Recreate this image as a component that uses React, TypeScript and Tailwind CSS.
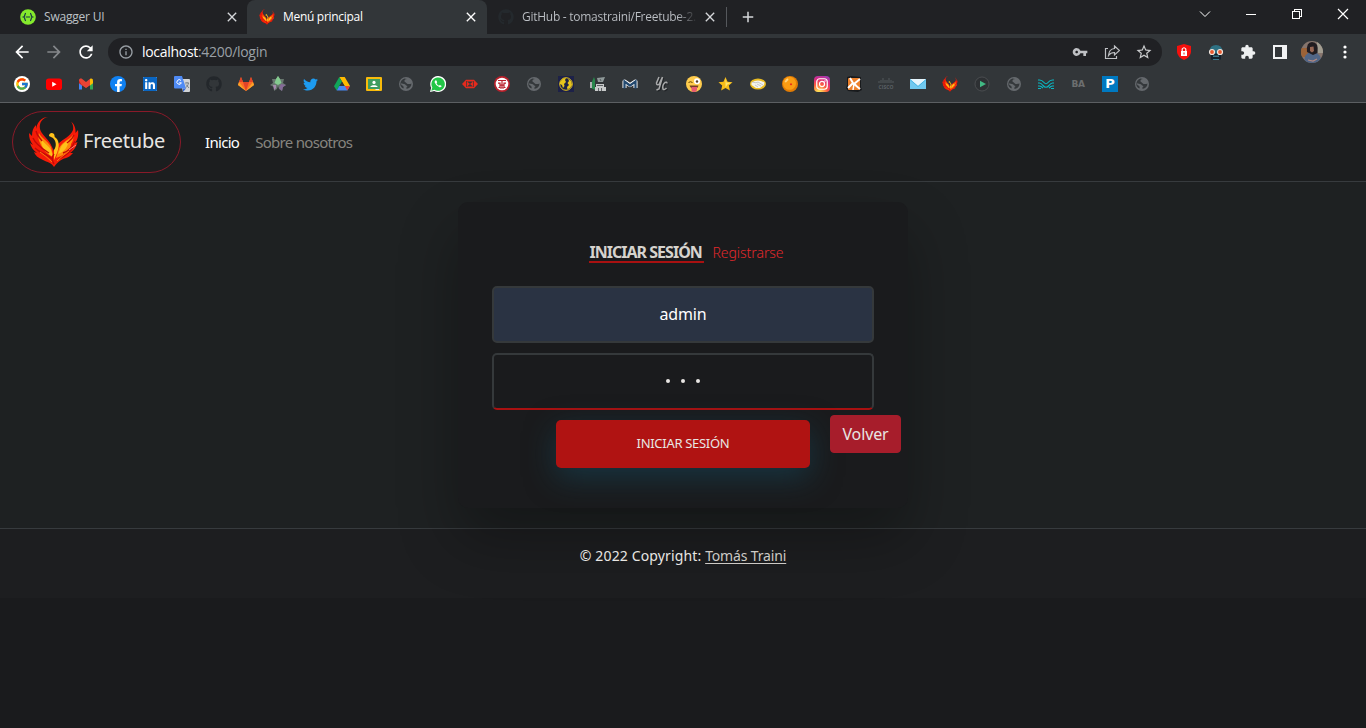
import React from "react";
import { FcGoogle } from "react-icons/fc";
import { FaGithub, FaTwitter, FaFacebookF, FaLinkedin } from "react-icons/fa";
import {
  MdArrowBack,
  MdArrowForward,
  MdRefresh,
  MdInfoOutline,
  MdVpnKey,
  MdStarBorder,
  MdExtension,
  MdClose,
  MdAdd,
} from "react-icons/md";

type SvgProps = { className?: string; children?: React.ReactNode };

const Svg16 = ({ className = "size-4", children }: SvgProps) => (
  <svg viewBox="0 0 16 16" className={className}>
    {children}
  </svg>
);

const Phoenix = ({ className = "size-4" }: { className?: string }) => (
  <svg viewBox="0 0 50 52" className={className}>
    <path
      d="M19 1C13 2 10 7 11 13C12 18 18 22 21 27L25 35L29 28C34 23 42 20 44 14C45 10 43 6 41 5C45 7 47 12 46.500 17L49 14C50 20 48 25 46 27L48.500 26C47 32 44 35 41 37L44 37C41 41 37 42 34 43C30 45 28 47 25 51C23 47 18 46 14 44C9 42 6 39 5 36L8 37C4 34 2 31 1 27L4 29C1 25 0 22 0 17L3 20C3 15 4 12 7 9L7 13C8 7 12 1 19 1Z"
      fill="#f51b08"
    />
    <path
      d="M10 17C12 22 18 24 22 31L24 39C18 36 13 33 11 27C9 23 9 20 10 17ZM44 19C40 24 34 25 30 32L27 42L32 40C38 37 42 33 42 28C44 25 45 22 44 19Z"
      fill="#ff8a0a"
    />
    <path
      d="M12 23C15 27 19 29 22 34L24 41C18 38 12 33 12 23ZM40 24C36 26 33 28 31 33L29 38C35 36 39 31 40 24ZM25 34C28 30 27 25 24 22L20 20C20 17 23 16 25 18C26 20 25 21 27 22C31 26 30 32 28 37L25 44Z"
      fill="#ffc21a"
    />
    <path
      d="M4 22C7 29 14 33 20 37M6 32C11 37 18 38 23 43M30 43C36 40 41 37 44 31M34 37C40 35 44 30 46 25M25 38C22 42 23 45 25 48M7 15C8 20 11 22 13 25M45 19C43 24 40 25 38 27"
      stroke="#c40907"
      strokeWidth="1.400"
      fill="none"
    />
    <path d="M11 36Q17 40 23 46M40 35Q32 41 28 45" stroke="#ff7a0c" fill="none" />
    <path d="M40 34L47 29" stroke="#ff9a91" strokeWidth=".8" />
  </svg>
);

const Swagger = () => (
  <Svg16>
    <circle cx="8" cy="8" r="7.800" fill="#85ea2d" />
    <path
      d="M6 4.400C4.200 4.400 5.600 7.400 3.600 8C5.600 8.600 4.200 11.600 6 11.600M10 4.400C11.800 4.400 10.400 7.400 12.400 8C10.400 8.600 11.800 11.600 10 11.600M5.800 8H10.200"
      stroke="#173647"
      strokeWidth="1.200"
      fill="none"
    />
  </Svg16>
);

const Google = () => (
  <span className="flex size-4 items-center justify-center rounded-full bg-white">
    <FcGoogle className="size-[14px]" />
  </span>
);
const YouTube = () => (
  <Svg16>
    <rect y="2.500" width="16" height="11.500" rx="2.800" fill="#f00" />
    <path d="M6.200 5.800V10.700L10.500 8.250Z" fill="#fff" />
  </Svg16>
);
const Gmail = () => (
  <Svg16>
    <path d="M1 3.800V13.500H4V7Z" fill="#4285f4" />
    <path d="M15 3.800V13.500H12V7Z" fill="#34a853" />
    <path d="M1 4.500V7.200L4 9.400V5Z" fill="#c5221f" />
    <path d="M15 4.500V7.200L12 9.400V5Z" fill="#fbbc04" />
    <path d="M1 4.500C1 2.500 3 2 4.200 3L8 5.900L11.800 3L12 3V9.400L8 12.200L4 9.400Z" fill="#ea4335" />
    <path d="M12 3C13.200 2 15 2.600 15 4.500L12 6.700Z" fill="#fbbc04" />
    <path d="M4 9.400L8 12.300L12 9.400V13.500H4Z" fill="#323639" />
  </Svg16>
);
const Facebook = () => (
  <span className="flex size-4 items-end justify-center rounded-full bg-[#1081f2]">
    <FaFacebookF className="h-[13px] w-[9px] text-white" />
  </span>
);
const LinkedIn = () => (
  <span className="flex size-[14px] items-center justify-center bg-white">
    <FaLinkedin className="size-4 shrink-0 text-[#0a66c2]" />
  </span>
);
const Translate = () => (
  <Svg16>
    <path d="M6 3H15Q16 3 16 4V15Q16 16 15 16H9Z" fill="#d2d4d6" />
    <path d="M9 12.500H12L9 16Z" fill="#3367d6" />
    <path d="M1 0H8L12 12.500H1Q0 12.500 0 11.500V1Q0 0 1 0Z" fill="#4f8bf5" />
    <path d="M7 4.500A2.300 2.300 0 1 0 7.400 6.800H5.200" stroke="#fff" strokeWidth="1" fill="none" />
    <path d="M11 7H15M13 6V7M14.500 7C14 9.500 12.800 11 11.500 12M12 8.500L15 12" stroke="#717a82" strokeWidth=".9" fill="none" />
  </Svg16>
);
const GitLab = () => (
  <Svg16>
    <path d="M8 15L0 9L1 6L3 1L5 6H11L13 1L15 6L16 9Z" fill="#fc6d26" />
    <path d="M8 15L5 6H11Z" fill="#e24329" />
    <path d="M8 15L0 9L1 6ZM8 15L16 9L15 6Z" fill="#fca326" />
    <path d="M1 6L3 1L5 6ZM11 6L13 1L15 6Z" fill="#e24329" />
  </Svg16>
);
const Cog = () => (
  <Svg16>
    <path d="M8 0L10 3L14 3L13 7L16 9L13 11L12 15L9 13L8 10L7 13L4 15L4 11L0 9L3 7L2 3L6 3Z" fill="#68776f" />
    <path d="M8 0L10 3L11.500 7L8 9L4.500 7L6 3Z" fill="#84cb8f" />
    <path d="M11 8L16 9L13 11L12 15L9 12Z" fill="#856a98" />
    <path d="M3 9L6 9L6 12L4 14Z" fill="#a68aae" />
  </Svg16>
);
const Drive = () => (
  <Svg16>
    <path d="M5.300 1H10.700L16 10H10.700Z" fill="#ffba00" />
    <path d="M5.300 1L0 10.200L2.700 14.500L8 5.700Z" fill="#10a65a" />
    <path d="M5.300 10H16L13.300 14.500H2.700Z" fill="#4688f4" />
    <path d="M10.800 10H16L13.300 14.500Z" fill="#ea4335" />
    <path d="M8 5.700L10.500 10H5.400Z" fill="#323639" />
  </Svg16>
);
const Classroom = () => (
  <Svg16>
    <rect y="1" width="16" height="14" rx="1" fill="#f9bb0b" />
    <rect x="2" y="3" width="12" height="10" fill="#3f9c60" />
    <circle cx="8" cy="6.400" r="1.600" fill="#fff" />
    <path d="M4.300 11C4.500 8.500 11.500 8.500 11.700 11Z" fill="#fff" />
    <path d="M9.500 13H13V14H9.500Z" fill="#eee" />
  </Svg16>
);
const Globe = () => (
  <Svg16>
    <circle cx="8" cy="8" r="7" fill="#65696d" />
    <path
      d="M9 3Q6 3 6.500 5.500L9.500 8Q13 8 13.500 7.500L13 10Q11 13 8.500 13Q8 11 9.500 10.300Q7.500 9 7 8.200L2.700 7.200Q3 9.500 5.200 10Q6 11 5.500 12.500Q2 11 2.300 7.500Q3 3.500 6.500 2.500Z"
      fill="#34383b"
    />
  </Svg16>
);
const WhatsApp = () => (
  <Svg16>
    <path d="M0 16L1.200 11.800A8 8 0 1 1 4.200 14.900Z" fill="#fff" />
    <path d="M1.300 14.700L2.300 11.500A6.700 6.700 0 1 1 4.500 13.800Z" fill="#22c647" />
    <path d="M5.600 4.300Q4.300 5 4.700 6.500Q6 10 9.500 11.300Q11.300 11.500 11.700 10L9.900 8.900L8.900 9.800Q7.300 9 6.500 7.300L7.200 6.300L6.400 4.400Z" fill="#fff" />
  </Svg16>
);
const RedHex = () => (
  <Svg16>
    <path d="M0 8L4 3.800H12L16 8L12 12.200H4Z" fill="#e52a1d" />
    <path d="M5 5.500H11L8 8ZM5 10.500H11L8 8Z" fill="#34373a" />
    <path d="M4.500 5V11M11.500 5V11" stroke="#34373a" strokeWidth=".7" />
  </Svg16>
);
const RedSeal = () => (
  <Svg16>
    <circle cx="8" cy="8" r="8" fill="#b9202b" />
    <circle cx="8" cy="8" r="6.300" fill="#fff" />
    <path d="M4 4.500H12M4 7.200H6V11.500H4.500M12 7.200H10V11.500H11.500M8 4.500V11.500M6 9.200H10M6 12H10" stroke="#b9202b" strokeWidth="1.200" fill="none" />
  </Svg16>
);
const YellowGlobe = () => (
  <Svg16>
    <path d="M0 0H16V16H0Z" fill="#1d2148" />
    <circle cx="8" cy="8" r="6.300" fill="#1d2148" stroke="#e8c51c" strokeWidth="1" />
    <path d="M2 6L5 2.500L8 2L7 4L8 6L6 8L6.500 10L5 12L4 9L2 8ZM10 2.500L13 5L14 9L12 12L9.500 13.500L9 11L11 9L9.500 7L11 5Z" fill="#e8c51c" />
  </Svg16>
);
const GreenSign = () => (
  <Svg16>
    <path d="M7 2L15 1L13 6H8Z" fill="#8f9999" />
    <path d="M4 1L1 8V12L5 14V4Z" fill="#27874b" />
    <path d="M0 6H2V12H0Z" fill="#aeb3b4" />
    <path d="M6 8H14V11H6ZM5 11H16V15H5Z" fill="#c7caca" />
    <path d="M10 3L11 5M8.500 12V15M11.500 12V15M7 9.500H13" stroke="#42474b" strokeWidth=".8" />
  </Svg16>
);
const BlueM = () => (
  <Svg16>
    <path d="M2.500 12V5.500L8 9.200L13.500 5.500V12" stroke="#fff" strokeWidth="4" fill="none" strokeLinejoin="round" />
    <path d="M2.500 12.500V5.500L8 9.500L13.500 5.500V12.500" stroke="#23496f" strokeWidth="2.300" fill="none" />
  </Svg16>
);
const Script = () => (
  <Svg16>
    <g fill="none" strokeWidth="1.500">
      <path d="M5 1L2.500 7Q2.500 9.500 5 8.500L8 2M8.500 1L5 13L2.500 14M13 7.500Q13 5.500 11 6.500Q8 9 9 13Q10 14.500 12.500 12" stroke="#202326" transform="translate(1 1)" />
      <path d="M5 1L2.500 7Q2.500 9.500 5 8.500L8 2M8.500 1L5 13L2.500 14M13 7.500Q13 5.500 11 6.500Q8 9 9 13Q10 14.500 12.500 12" stroke="#a8a9aa" />
    </g>
  </Svg16>
);
const Wink = () => (
  <Svg16>
    <circle cx="8" cy="8" r="8" fill="#ffcc4d" />
    <circle cx="11" cy="5.300" r="3" fill="#fff" />
    <circle cx="11" cy="5.500" r="1.200" fill="#57402b" />
    <path d="M2.500 6.500Q4.500 5 6.500 6.500" stroke="#664500" strokeWidth="1" fill="none" />
    <path d="M3.500 9.500H12.500Q12 12.500 8 13Q4.500 12.500 3.500 9.500Z" fill="#754027" />
    <path d="M5.500 11H11V14Q10.500 16 8.300 16Q5.500 16 5.500 14Z" fill="#e75a70" />
  </Svg16>
);
const Star = () => (
  <Svg16 className="mr-px size-4">
    <path d="M8 .5L10.200 5.500L15.500 6L11.500 9.500L12.700 15L8 12.200L3.300 15L4.500 9.500L.5 6L5.800 5.500Z" fill="#f7bd18" />
    <path d="M8 2L9 6.500L14 6.700L10 8.500L8 12Z" fill="#ffe46b" />
  </Svg16>
);
const Handshake = () => (
  <Svg16>
    <ellipse cx="8" cy="8" rx="8" ry="5.500" fill="#eabc22" />
    <path d="M1.500 6.500Q8 2.700 14.500 6.500L14 9L10 12H6L1.500 9Z" fill="#f5f4ec" />
    <path d="M2 6L6 6.800L8 6L13 9M5 9L8 11M7 8L11 10" stroke="#a3abb0" strokeWidth=".6" fill="none" />
  </Svg16>
);
const OrangeBall = () => (
  <Svg16>
    <circle cx="8" cy="8" r="8" fill="#e17c05" />
    <circle cx="7.500" cy="7.300" r="6.500" fill="#fb9d13" />
    <path d="M2.500 6Q3.500 3 6 2.200L6.500 4L4 6.500Z" fill="#ffd27a" />
    <path d="M9 7L10.200 8.200L9 9.400L7.800 8.200Z" fill="#e9231c" />
  </Svg16>
);
const Instagram = () => (
  <span className="flex size-4 items-center justify-center rounded-[4px] bg-[radial-gradient(circle_at_30%_105%,#ffdb55_10%,#fd6040_42%,#dd2b7b_68%,#8141cb_100%)]">
    <Svg16 className="size-3">
      <g fill="none" stroke="#fff" strokeWidth="1.600">
        <rect x="1" y="1" width="14" height="14" rx="4" />
        <circle cx="8" cy="8" r="3.400" />
      </g>
      <circle cx="12" cy="4" r="1" fill="#fff" />
    </Svg16>
  </span>
);
const OrangeX = () => (
  <Svg16>
    <path d="M1 1L5 0L15 1V11L16 14L12 16L2 15L0 12L1 9Z" fill="#181a1c" />
    <rect x="2" y="2" width="12" height="12" rx="1" fill="#ed812b" />
    <path d="M4 2L7 7L2 12M14 3L8 8L14 13M7 7L10 9" stroke="#fff" strokeWidth="2" fill="none" />
    <path d="M8 8L7 14" stroke="#fff" strokeWidth="1.500" />
  </Svg16>
);
const Cisco = () => (
  <span className="flex h-4 w-4 flex-col items-center justify-center">
    <svg viewBox="0 0 16 6" className="h-[6px] w-4">
      <path d="M1 3V5M3 2V5M5 0V5M7 2V5M9 2V5M11 0V5M13 2V5M15 3V5" stroke="#53585d" />
    </svg>
    <span className="text-[5px] leading-[6px] font-bold text-[#5b6065]">CISCO</span>
  </span>
);
const Mail = () => (
  <Svg16>
    <rect y="3" width="16" height="10" fill="#70c9ef" />
    <path d="M0 3H16L8 10Z" fill="#e5f5fc" />
    <path d="M0 3.500L8 10.500L16 3.500" stroke="#3caee0" strokeWidth=".8" fill="none" />
  </Svg16>
);
const Play = () => (
  <Svg16>
    <circle cx="8" cy="8" r="7" fill="#2d3033" stroke="#505356" strokeWidth=".8" />
    <path d="M6 4.700V11.300L12 8Z" fill="#41b883" />
  </Svg16>
);
const Waves = () => (
  <Svg16>
    <path d="M0 4H1.500Q4 4 6 6.500Q8 9 10 6.500Q12 4 14.500 4H16M0 7H1.500Q3 7 5 9.500Q8 13 11 9.500Q13 7 14.500 7H16M0 10H1.500Q3 10 5 12M11 12Q13 10 14.500 10H16M0 12.500H3M13 12.500H16" stroke="#09b8c4" strokeWidth="1.200" fill="none" />
  </Svg16>
);

const bookmarks: React.ReactNode[] = [
  <Google />,
  <YouTube />,
  <Gmail />,
  <Facebook />,
  <LinkedIn />,
  <Translate />,
  <FaGithub className="size-4 text-[#23272b]" />,
  <GitLab />,
  <Cog />,
  <FaTwitter className="size-[15px] text-[#1d9bf0]" />,
  <Drive />,
  <Classroom />,
  <Globe />,
  <WhatsApp />,
  <RedHex />,
  <RedSeal />,
  <Globe />,
  <YellowGlobe />,
  <GreenSign />,
  <BlueM />,
  <Script />,
  <Wink />,
  <Star />,
  <Handshake />,
  <OrangeBall />,
  <Instagram />,
  <OrangeX />,
  <Cisco />,
  <Mail />,
  <Phoenix />,
  <Play />,
  <Globe />,
  <Waves />,
  <span className="font-['DejaVu_Sans',sans-serif] text-[9px] leading-4 font-bold tracking-[-0.3px] text-[#6c6e6f]">BA</span>,
  <span className="flex size-4 items-center justify-center bg-[#0079c1] font-['DejaVu_Sans',sans-serif] text-[13px] leading-4 font-bold text-white">
    P
  </span>,
  <Globe />,
];

const TabStrip = () => (
  <div className="flex h-[34px] bg-[#202124] text-[12px] text-[#bdc1c6]">
    <div className="flex w-[247px] items-center pr-[7px] pl-5">
      <Swagger />
      <span className="ml-2 grow tracking-[-0.2px]">Swagger UI</span>
      <MdClose className="size-4 text-[#d5d7da]" />
    </div>
    <div className="flex w-[240px] items-center rounded-t-lg bg-[#323639] pr-2 pl-3 text-white">
      <Phoenix />
      <span className="ml-2 grow tracking-[-0.3px]">Menú principal</span>
      <MdClose className="size-4" />
    </div>
    <div className="flex w-[239px] items-center pr-2 pl-[11px]">
      <FaGithub className="size-4 shrink-0 text-[#24292d]" />
      <span className="mr-1 ml-2 w-[176px] bg-linear-to-r from-[#bdc1c6] from-88% to-[#202124] bg-clip-text tracking-[-0.27px] whitespace-nowrap text-transparent">
        GitHub - tomastraini/Freetube-2.
      </span>
      <MdClose className="size-4 shrink-0 text-[#d5d7da]" />
    </div>
    <div className="mt-[7px] h-5 w-px bg-[#55585c]" />
    <MdAdd className="mt-2 ml-[12px] size-[18px] text-[#d5d7da]" />
    <div className="ml-auto flex h-7 items-center text-white">
      <svg viewBox="0 0 12 12" className="mr-[34px] size-3 fill-none stroke-current">
        <path d="M1 3.500L6 8.500L11 3.500" />
      </svg>
      <svg viewBox="0 0 12 12" className="mr-[34px] size-3 fill-none stroke-current" shapeRendering="crispEdges">
        <path d="M1 6.500H11" />
      </svg>
      <svg viewBox="0 0 12 12" className="mr-[34px] size-3 fill-none stroke-current" shapeRendering="crispEdges">
        <path d="M1.500 3.500H8.500V10.500H1.500ZM3.500 3V1.500H10.500V8.500H9" />
      </svg>
      <svg viewBox="0 0 12 12" className="mr-[17px] size-3 fill-none stroke-current">
        <path d="M1 1L11 11M11 1L1 11" strokeWidth="1.200" />
      </svg>
    </div>
  </div>
);

const Toolbar = () => (
  <div className="flex h-9 items-center bg-[#323639]">
    <MdArrowBack className="ml-3 size-5 text-white" />
    <MdArrowForward className="ml-3 size-5 text-[#85888b]" />
    <MdRefresh className="ml-3 size-5 text-white" />
    <div className="ml-3 flex h-7 w-[1054px] items-center rounded-full bg-[#202124] pr-[9px] pl-[10px] text-[#9aa0a6]">
      <MdInfoOutline className="size-4" />
      <span className="ml-2 grow text-[14px] leading-5 tracking-[-0.3px]">
        <span className="text-white">localhost</span>:4200/login
      </span>
      <MdVpnKey className="size-4 text-[#bfc1c4]" />
      <svg viewBox="0 0 16 16" className="ml-4 size-4 fill-none stroke-[#bfc1c4] stroke-[1.2]">
        <path d="M4 4.500H1.500V14.500H12.500V12M10.500 2L15.500 6.500L10.500 11V8.500Q6.500 8.500 4.500 11.500Q5 5 10.500 4.500Z" />
      </svg>
      <MdStarBorder className="ml-[15px] size-[18px] text-[#c9cbcd]" />
    </div>
    <svg viewBox="0 0 16 16" className="ml-[14px] size-4">
      <path d="M8 0L15 2V8Q14.500 13 8 16Q1.500 13 1 8V2Z" fill="#f5100d" />
      <path d="M5 7H11V12H5Z" fill="#fff" />
      <path d="M6.200 7V5Q8 2.500 9.800 5V7" stroke="#fff" strokeWidth="1.200" fill="none" />
      <path d="M8 8.500V10.500" stroke="#f5100d" />
    </svg>
    <svg viewBox="0 0 16 16" className="ml-4 size-4">
      <path d="M1.500 7Q2 1 8 1Q14 1 14.500 7L12 10H4Z" fill="#2e7183" />
      <path d="M3 9.500H13V15.500H3Z" fill="#13222d" />
      <path d="M5 11.500H11V13H5ZM5 15H11V16H5Z" fill="#3c7688" />
      <circle cx="4" cy="8" r="2.500" fill="#e9592e" stroke="#efe6df" strokeWidth="1.200" />
      <circle cx="12" cy="8" r="2.500" fill="#e9592e" stroke="#efe6df" strokeWidth="1.200" />
    </svg>
    <MdExtension className="ml-4 size-4 text-[#eef0f1]" />
    <svg viewBox="0 0 16 16" className="ml-4 size-4">
      <path d="M1 1H15V15H1ZM3 3V13H10V3Z" fill="#f1f3f4" fillRule="evenodd" />
    </svg>
    <svg viewBox="0 0 22 22" className="ml-[13px] size-[22px] overflow-hidden rounded-full">
      <path d="M0 0H22V22H0Z" fill="#86756d" />
      <path d="M0 7H7V16H0Z" fill="#9c6338" />
      <path d="M16 1H22V12H16Z" fill="#a29d91" />
      <path d="M3 22L4 15L8 11H15L19 15L21 22Z" fill="#516687" />
      <path d="M6 11Q5 1 11 1Q18 1 16.500 12L12 14Z" fill="#211c20" />
      <path d="M9 6L12.500 5.500L13 10L11 11.500L9 10Z" fill="#966654" />
      <path d="M7 19L12 20L16 18" stroke="#b58a80" strokeWidth="1.200" fill="none" />
    </svg>
    <svg viewBox="0 0 4 16" className="ml-[20px] h-4 w-1 fill-white">
      <circle cx="2" cy="3" r="1.600" />
      <circle cx="2" cy="8" r="1.600" />
      <circle cx="2" cy="13" r="1.600" />
    </svg>
  </div>
);

export default function App() {
  return (
    <div className="flex h-[728px] w-[1366px] flex-col overflow-hidden bg-[#1a1b1d] font-['Open_Sans',sans-serif]">
      <header>
        <TabStrip />
        <Toolbar />
        <div className="flex h-[33px] gap-4 border-b border-[#5c5f62] bg-[#323639] pt-[6px] pl-[14px]">
          {bookmarks.map((icon, i) => (
            <span key={i} className="flex size-4 shrink-0 items-center justify-center">
              {icon}
            </span>
          ))}
        </div>
      </header>

      <nav className="flex h-[79px] items-center border-b border-[#373b3e] bg-[#1c1e1f] pl-3 font-['Noto_Sans',sans-serif]">
        <a className="flex h-[62px] w-[169px] items-center rounded-[31px] border border-[#891a29] pl-4 text-[#e8e6e3]">
          <Phoenix className="h-[52px] w-[50px]" />
          <span className="ml-1 pb-[2px] text-[20px] tracking-[-0.25px]">Freetube</span>
        </a>
        <a className="ml-6 text-[15px] tracking-[-0.7px] text-white">Inicio</a>
        <a className="ml-4 text-[15px] tracking-[-0.7px] text-[#87857f]">Sobre nosotros</a>
      </nav>

      <main className="flex h-[346px] flex-col items-center bg-[#1e2122] pt-5 font-['Noto_Sans',sans-serif]">
        <section className="relative z-10 flex h-[306px] w-[450px] flex-col items-center rounded-[10px] bg-[#1a1b1d] shadow-[0_30px_60px_0_rgba(0,0,0,0.3)]">
          <div className="mt-[39px] flex h-[45px] items-start pl-[7px]">
            <h2 className="h-[22px] w-[115px] border-b-2 border-[#a91111] text-[16px] leading-[22px] font-bold tracking-[-0.98px] whitespace-nowrap text-[#d6d3ce]">
              INICIAR SESIÓN
            </h2>
            <a className="ml-2 text-[14px] leading-[24px] font-light tracking-[-0.05px] text-[#e2292c]">Registrarse</a>
          </div>
          <div className="flex h-[57px] w-[382px] items-center justify-center rounded-[5px] border-2 border-[#35393b] bg-[#2a3343] pb-[2px] text-[16px] tracking-[-0.2px] text-white">
            admin
          </div>
          <div className="mt-[10px] flex h-[57px] w-[382px] items-center justify-center gap-[11px] rounded-[5px] border-2 border-[#35393b] border-b-[#a91111] pb-px">
            <i className="size-1 rounded-full bg-[#e8e6e3]" />
            <i className="size-1 rounded-full bg-[#e8e6e3]" />
            <i className="size-1 rounded-full bg-[#e8e6e3]" />
          </div>
          <div className="flex w-full items-start pt-[5px] pl-[98px]">
            <button className="mt-[5px] h-12 w-[254px] rounded-[5px] bg-[#b01312] text-[13px] tracking-[-0.3px] text-[#e8e6e3] shadow-[0_10px_30px_0_rgba(22,72,92,0.55)]">
              INICIAR SESIÓN
            </button>
            <button className="ml-5 h-[38px] w-[71px] rounded-[4px] border border-[#a71d2b] bg-[#a71d2b] text-[16px] tracking-[-0.1px] text-[#e8e6e3]">
              Volver
            </button>
          </div>
        </section>
      </main>

      <footer className="flex h-[70px] justify-center border-t border-[#373b3e] bg-[#1d1e20] pt-[15px] font-['Noto_Sans',sans-serif] text-[14px] leading-[24px] text-[#e8e6e3]">
        <p className="relative z-20 tracking-[0.14px]">
          © 2022 Copyright: <a className="tracking-[-0.15px] text-[#cdcac5] underline underline-offset-2">Tomás Traini</a>
        </p>
      </footer>
    </div>
  );
}
